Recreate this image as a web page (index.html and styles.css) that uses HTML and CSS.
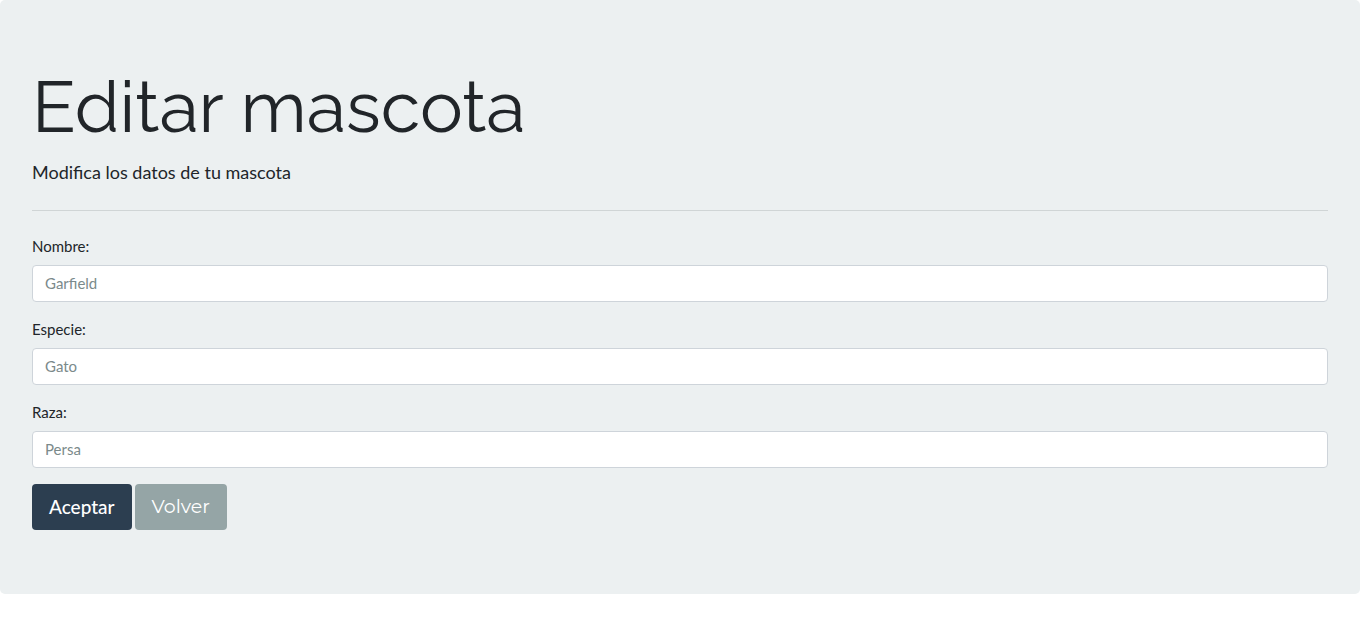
FILE: index.html
```html
<!DOCTYPE html>
<html lang="es">
<head>
<meta charset="utf-8">
<meta name="viewport" content="width=device-width, initial-scale=1">
<title>Editar mascota</title>
<link rel="stylesheet" href="styles.css">
</head>
<body>
<main class="jumbotron">
  <h1 class="title">Editar mascota</h1>
  <p class="lead">Modifica los datos de tu mascota</p>
  <hr class="divider">
  <form class="pet-form">
    <div class="form-group">
      <label for="nombre">Nombre:</label>
      <input class="form-control" type="text" id="nombre" name="nombre" placeholder="Garfield">
    </div>
    <div class="form-group">
      <label for="especie">Especie:</label>
      <input class="form-control" type="text" id="especie" name="especie" placeholder="Gato">
    </div>
    <div class="form-group">
      <label for="raza">Raza:</label>
      <input class="form-control" type="text" id="raza" name="raza" placeholder="Persa">
    </div>
    <div class="actions">
      <button class="btn btn-primary" type="submit">Aceptar</button>
      <a class="btn btn-secondary" href="#">Volver</a>
    </div>
  </form>
</main>
</body>
</html>
```
FILE: styles.css
```css
*, *::before, *::after { box-sizing: border-box; }

body {
  margin: 0;
  background: #fff;
  color: #212529;
  font-family: Lato, "Liberation Sans", sans-serif;
  font-size: 15px;
  line-height: 22px;
}

.jumbotron {
  padding: 64px 32px;
  margin-bottom: 32px;
  background: #ecf0f1;
  border-radius: 5px;
}

.title {
  margin: 0 0 8px;
  font-family: Raleway, Lato, sans-serif;
  font-size: 72px;
  font-weight: 400;
  line-height: 86px;
}

.lead {
  margin: 0 0 24px;
  font-size: 18px;
  line-height: 28px;
}

.divider {
  margin: 0 0 24px;
  border: 0;
  border-top: 1px solid #d0d5d6;
}

.form-group { margin-bottom: 16px; }

.form-group label {
  display: block;
  margin-bottom: 8px;
}

.form-control {
  display: block;
  width: 100%;
  padding: 6px 12px 7px;
  border: 1px solid #ced4da;
  border-radius: 4px;
  background: #fff;
  color: #7b8a8b;
  font: inherit;
}

.form-control::placeholder { color: #7b8a8b; opacity: 1; }

.actions { display: flex; gap: 3px; }

.btn {
  padding: 8px 16px;
  border: 1px solid transparent;
  border-radius: 4px;
  color: #fff;
  font-family: inherit;
  font-size: 19px;
  line-height: 28px;
  text-decoration: none;
  cursor: pointer;
}

.btn-primary {
  background: #2c3e50;
  font-weight: 500;
}

.btn-secondary {
  background: #95a5a6;
  font-family: Montserrat, Lato, sans-serif;
}
```
